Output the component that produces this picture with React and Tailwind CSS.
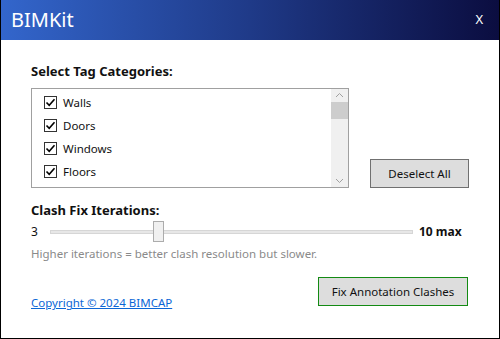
import React, { useState } from 'react';

const categories = ['Walls', 'Doors', 'Windows', 'Floors'];

function CheckBox({ checked }) {
  return (
    <span className="w-[13px] h-[13px] border border-[#333333] bg-white flex items-center justify-center shrink-0">
      {checked && (
        <svg width="11" height="11" viewBox="0 0 11 11">
          <path d="M1.5 5.5 L4.2 8.3 L9.5 2.3" fill="none" stroke="#000" strokeWidth="1.6" />
        </svg>
      )}
    </span>
  );
}

function App() {
  const [checked] = useState(categories.map(() => true));

  return (
    <div className="w-[500px] h-[339px] bg-white flex flex-col border-x border-b border-black text-[#111] font-['Noto_Sans','Open_Sans',sans-serif]">
      {/* title bar */}
      <div className="h-[40px] shrink-0 flex items-center justify-between pl-[10px] pr-[16px] bg-gradient-to-r from-[#3366cc] via-[#1f3a88] to-[#0b0d40]">
        <span className="text-white text-[20px] leading-none">BIMKit</span>
        <span className="text-white text-[13px]">X</span>
      </div>

      <div className="flex flex-col px-[30px] pt-[21px]">
        <div className="text-[13px] font-bold leading-[20px]">Select Tag Categories:</div>

        <div className="flex items-end mt-[7px]">
          <div className="w-[318px] h-[100px] border border-[#a0a0a0] flex">
            <div className="flex-1 flex flex-col pt-[5px] pl-[12px] gap-[6px]">
              {categories.map((c, i) => (
                <label key={c} className="flex items-center gap-[6px] h-[17px] text-[11.5px]">
                  <CheckBox checked={checked[i]} />
                  {c}
                </label>
              ))}
            </div>
            <div className="w-[17px] bg-[#f0f0f0] flex flex-col items-center justify-between py-[3px]">
              <svg width="9" height="6" viewBox="0 0 9 6">
                <path d="M1 5 L4.5 1.5 L8 5" fill="none" stroke="#a0a0a0" strokeWidth="1" />
              </svg>
              <div className="w-full h-[17px] bg-[#cdcdcd] mb-auto mt-[4px]" />
              <svg width="9" height="6" viewBox="0 0 9 6">
                <path d="M1 1 L4.5 4.5 L8 1" fill="none" stroke="#a0a0a0" strokeWidth="1" />
              </svg>
            </div>
          </div>
          <button className="ml-[21px] w-[99px] h-[29px] bg-[#dddddd] border border-[#707070] text-[11.5px]">
            Deselect All
          </button>
        </div>

        <div className="text-[13px] font-bold leading-[20px] mt-[12px]">Clash Fix Iterations:</div>
        <div className="flex items-center h-[20px] mt-[2px]">
          <span className="text-[12px] w-[19px]">3</span>
          <div className="relative w-[363px] h-[4px] bg-[#e7e7e7] border border-[#d6d6d6]">
            <div className="absolute left-[102px] top-[-10px] w-[11px] h-[21px] bg-[#f0f0f0] border border-[#acacac]" />
          </div>
          <span className="text-[12px] font-bold ml-[6px]">10 max</span>
        </div>
        <div className="text-[11.5px] text-[#8a8a8a] mt-[3px]">Higher iterations = better clash resolution but slower.</div>

        <div className="flex items-start justify-between mt-[15px]">
          <a href="#" className="text-[11.5px] text-[#0b66d6] underline mt-[17px]">Copyright © 2024 BIMCAP</a>
          <button className="w-[150px] h-[29px] bg-[#dddddd] border border-[#138a13] text-[11.5px] mr-[1px]">
            Fix Annotation Clashes
          </button>
        </div>
      </div>
    </div>
  );
}

export default App;
